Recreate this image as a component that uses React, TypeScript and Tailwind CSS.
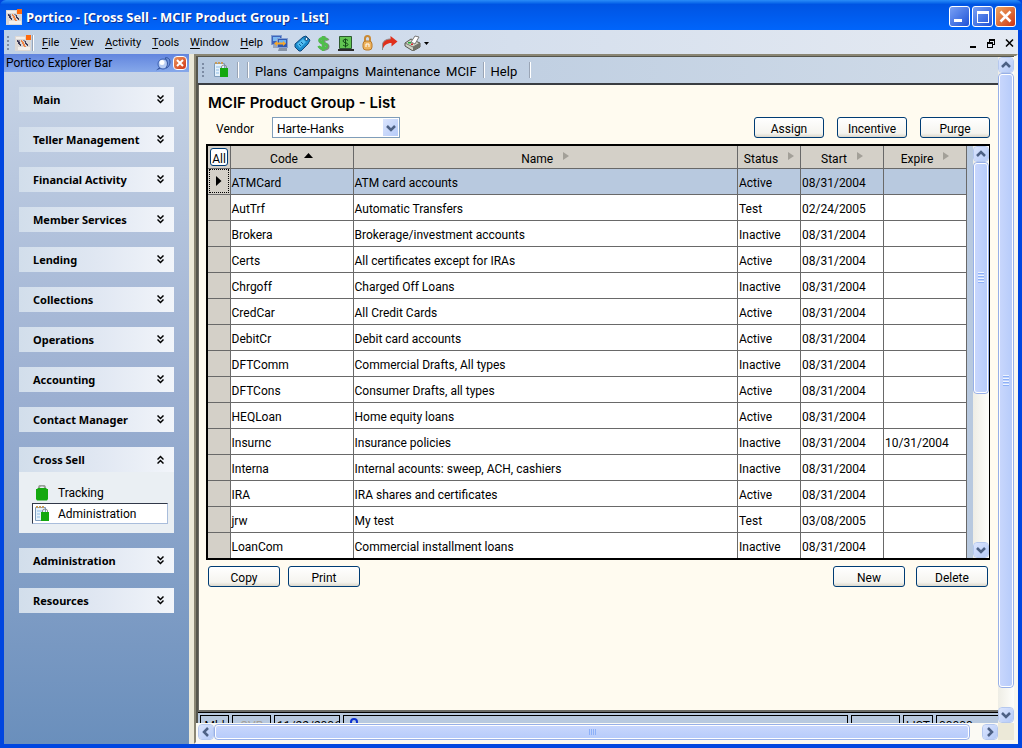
import React, { useState } from 'react';
import { clsx } from 'clsx';

const groups = [
  'Main',
  'Teller Management',
  'Financial Activity',
  'Member Services',
  'Lending',
  'Collections',
  'Operations',
  'Accounting',
  'Contact Manager',
  'Cross Sell',
  'Administration',
  'Resources',
];

const menus = ['File', 'View', 'Activity', 'Tools', 'Window', 'Help'];

const products = [
  { code: 'ATMCard', name: 'ATM card accounts', status: 'Active', start: '08/31/2004', expire: '' },
  { code: 'AutTrf', name: 'Automatic Transfers', status: 'Test', start: '02/24/2005', expire: '' },
  { code: 'Brokera', name: 'Brokerage/investment accounts', status: 'Inactive', start: '08/31/2004', expire: '' },
  { code: 'Certs', name: 'All certificates except for IRAs', status: 'Active', start: '08/31/2004', expire: '' },
  { code: 'Chrgoff', name: 'Charged Off Loans', status: 'Inactive', start: '08/31/2004', expire: '' },
  { code: 'CredCar', name: 'All Credit Cards', status: 'Active', start: '08/31/2004', expire: '' },
  { code: 'DebitCr', name: 'Debit card accounts', status: 'Active', start: '08/31/2004', expire: '' },
  { code: 'DFTComm', name: 'Commercial Drafts, All types', status: 'Inactive', start: '08/31/2004', expire: '' },
  { code: 'DFTCons', name: 'Consumer Drafts, all types', status: 'Active', start: '08/31/2004', expire: '' },
  { code: 'HEQLoan', name: 'Home equity loans', status: 'Active', start: '08/31/2004', expire: '' },
  { code: 'Insurnc', name: 'Insurance policies', status: 'Inactive', start: '08/31/2004', expire: '10/31/2004' },
  { code: 'Interna', name: 'Internal acounts: sweep, ACH, cashiers', status: 'Inactive', start: '08/31/2004', expire: '' },
  { code: 'IRA', name: 'IRA shares and certificates', status: 'Active', start: '08/31/2004', expire: '' },
  { code: 'jrw', name: 'My test', status: 'Test', start: '03/08/2005', expire: '' },
  { code: 'LoanCom', name: 'Commercial installment loans', status: 'Inactive', start: '08/31/2004', expire: '' },
];

function Logo() {
  return (
    <svg width="16" height="16" viewBox="0 0 16 16" shapeRendering="crispEdges">
      <path d="M0 1h16v15H0z" fill="#dcd8d5" />
      <path d="M1 2h9v2H1zM3 12h12v3H3z" fill="#f2efec" />
      <path d="M2 5h1v1h1v1h1v2h1v2H5v-1H4V9H3V7H2z" fill="#3c3a58" />
      <path d="M3 5h2v2H4V6H3z" fill="#8f8a98" />
      <path d="M6 5h1v1h1v1h1v2h1v2h1v1H9v-1H8V9H7V7H6z" fill="#f08648" />
      <path d="M10 6h1v2h1v1h1v2h-1v-1h-1V9h-1z" fill="#3c3a58" />
      <path d="M8 5h2v2H9V6H8z" fill="#8f8a98" />
      <path d="M11 0h5v5h-5z" fill="#ff6a0d" />
    </svg>
  );
}

function NetworkIcon() {
  return (
    <svg width="17" height="17" viewBox="0 0 17 17">
      <rect x=".5" y=".5" width="10" height="9" fill="#3d64bd" stroke="#7f9bd0" />
      <path d="M2 2h7v4H2z" fill="#7cb9f2" />
      <path d="M2 10h6v3H2z" fill="#98a6ba" />
      <rect x="6.500" y="3.500" width="10" height="9" fill="#2f59b2" stroke="#86a0d2" />
      <path d="M8 5h7v3H8z" fill="#6aaef0" />
      <path d="M8 13h8v3H7z" fill="#8593a8" />
      <path d="M3 8.500l3-2.500v1.500h6V6l3 2.500-3 2.500V9.500H6V11z" fill="#f6a72a" />
    </svg>
  );
}

function TagIcon() {
  return (
    <svg width="17" height="17" viewBox="0 0 17 17">
      <path d="M1 9l8-7 3-1 4 4-2 4-7 7-2 0-4-4z" fill="#1b8ccd" stroke="#12487c" />
      <path d="M3 9l6-5 3 3-6 6z" fill="#54bdf0" />
      <path d="M5 9l2 2M7 7l2 2" stroke="#0c5c96" />
      <circle cx="12.500" cy="4" r="1.500" fill="#e8f6ff" stroke="#12487c" />
    </svg>
  );
}

function DollarIcon() {
  return (
    <svg width="13" height="17" viewBox="0 0 13 17" fill="none">
      <path d="M11 5.500C10 3 3 3 3 6s8 2 8 5.500S4 15 2.500 11.500M7 1v15" stroke="#7f8a82" strokeWidth="3" />
      <path d="M10 5C9 2.500 2.500 2.500 2.500 5.500S10 7.500 10 11 3 14 1.500 11M6 1v15" stroke="#4fbf4a" strokeWidth="2.500" />
    </svg>
  );
}

function CashIcon() {
  return (
    <svg width="16" height="17" viewBox="0 0 16 17">
      <path d="M1.500 1.500h12v12h-12z" fill="#62c552" stroke="#2d5a30" />
      <path d="M0 14h16v2H0z" fill="#2b2b2b" />
      <path d="M10 5.500C9 4 5 4 5 6s5 1.500 5 3.500-4 2-5 .5M7.500 3.500v9" stroke="#124a16" fill="none" />
    </svg>
  );
}

function LockIcon() {
  return (
    <svg width="11" height="16" viewBox="0 0 11 16">
      <path d="M3 7V3.500a2.500 2.500 0 015 0V7" fill="none" stroke="#c98934" strokeWidth="2" />
      <rect x="1" y="6" width="9" height="9" rx="3" fill="#eeb25c" stroke="#b87a2c" />
      <path d="M4 12V9h3v3" stroke="#fff" fill="none" />
    </svg>
  );
}

function ForwardIcon() {
  return (
    <svg width="17" height="16" viewBox="0 0 17 16">
      <path d="M1.500 15V10c0-4 4-6 8-6V1l7 5.500-6 5V8C6 8 3 10 1.500 15z" fill="#e0301c" />
      <path d="M1.500 15V10c0-4 4-6 8-6" stroke="#8f8a8a" fill="none" />
    </svg>
  );
}

function PrinterIcon() {
  return (
    <svg width="17" height="16" viewBox="0 0 17 16">
      <path d="M1 8l6-4 9 4v4l-7 4-8-5z" fill="#cfd2c6" stroke="#55554c" />
      <path d="M7 7l4-6 4 1-4 7z" fill="#fff" stroke="#777" />
      <path d="M1 8l8 4 7-4" fill="none" stroke="#77776c" />
      <path d="M9 12v4l7-4V8z" fill="#6f7168" />
      <path d="M4 7h3v1.500H4z" fill="#23b03a" />
      <path d="M7 8.500h2v1.500H7z" fill="#d12a2a" />
    </svg>
  );
}

function PinIcon() {
  return (
    <svg width="15" height="15" viewBox="0 0 15 15">
      <path d="M0 14.500l5-5 2 2z" fill="#35539c" />
      <circle cx="7" cy="8" r="5" fill="#b8cdf4" stroke="#3b5fb0" />
      <path d="M9 2c3-1 5 1 5 4s-2 6-4 6c2-3 2-7-1-10z" fill="#6f92dc" stroke="#34559f" />
      <circle cx="6" cy="6.500" r="2.500" fill="#fff" />
    </svg>
  );
}

function BagIcon() {
  return (
    <svg width="12" height="16" viewBox="0 0 12 16">
      <path d="M3 4V2.500a3 2 0 016 0V4" fill="none" stroke="#9aa09a" strokeWidth="2" />
      <path d="M0 4h1l1-1h8l1 1h1v10l-1 1.500H1L0 14z" fill="#14a80f" />
    </svg>
  );
}

function AdminIcon() {
  return (
    <svg width="15" height="16" viewBox="0 0 15 16">
      <path d="M.5 1.500h10v13H.5z" fill="#e6f2fb" stroke="#7f9dbb" />
      <path d="M1 1h9" stroke="#c79c5a" strokeWidth="2" strokeDasharray="2 1" />
      <path d="M2 5h5M2 8h3M2 11h3" stroke="#8fbde6" />
      <path d="M7.500 6.500V5a2.500 2 0 015 0v1.500" fill="none" stroke="#888" />
      <path d="M6 6h8v9H6z" fill="#14a80f" />
    </svg>
  );
}

function DoubleChevron({ up }: { up?: boolean }) {
  return (
    <svg width="7" height="9" viewBox="0 0 7 9" className={clsx(up && 'rotate-180')}>
      <path d="M.5.5l3 3 3-3M.5 4.500l3 3 3-3" fill="none" stroke="#000" strokeWidth="1.500" />
    </svg>
  );
}

const chevrons = {
  up: 'M1 7l4-4 4 4',
  down: 'M1 3l4 4 4-4',
  left: 'M7 1L3 5l4 4',
  right: 'M3 1l4 4-4 4',
};

function Chevron({ dir }: { dir: keyof typeof chevrons }) {
  return (
    <svg width="10" height="10" viewBox="0 0 10 10">
      <path d={chevrons[dir]} fill="none" stroke="#4d6185" strokeWidth="2.500" />
    </svg>
  );
}

function ScrollButton({ dir }: { dir: keyof typeof chevrons }) {
  return (
    <button
      aria-label={`Scroll ${dir}`}
      className="flex size-4 shrink-0 items-center justify-center rounded-sm border border-white bg-linear-to-br from-[#dbe5fe] to-[#b5caf7] outline-1 -outline-offset-1 outline-[#b5c8ee]"
    >
      <Chevron dir={dir} />
    </button>
  );
}

function VerticalScroll({ thumb }: { thumb: string }) {
  return (
    <div className="flex w-4 shrink-0 flex-col bg-linear-to-r from-[#eeede5] to-[#fefefb]">
      <ScrollButton dir="up" />
      <div className="min-h-0 flex-1">
        <div
          className={clsx(
            'flex flex-col items-center justify-center gap-px rounded-sm border border-[#98b0e8] bg-linear-to-r from-[#c9d7fd] to-[#b6cbfa] outline-1 -outline-offset-2 outline-white',
            thumb
          )}
        >
          {[0, 1, 2, 3].map((i) => (
            <span key={i} className="h-0.5 w-1.5 border-b border-[#8cb0f8] bg-[#eef4fe]" />
          ))}
        </div>
      </div>
      <ScrollButton dir="down" />
    </div>
  );
}

function XpButton({ children, className }: { children: React.ReactNode; className?: string }) {
  return (
    <button
      className={clsx(
        'h-[21px] rounded-[3px] border border-[#003c74] bg-linear-to-b from-white via-[#f5f4ef] via-80% to-[#dcd8cc] pt-0.5 text-center leading-4',
        className
      )}
    >
      {children}
    </button>
  );
}

function Separator() {
  return <span className="h-4 w-0.5 border-l border-[#9aa5b5] bg-white" />;
}

function Grip() {
  return (
    <span className="flex flex-col gap-0.5">
      {[0, 1, 2, 3].map((i) => (
        <span key={i} className="size-0.5 bg-[#7c8ba3]" />
      ))}
    </span>
  );
}

function SortMark() {
  return (
    <svg width="6" height="8" viewBox="0 0 6 8" className="mb-1.5">
      <path d="M0 0l6 4-6 4z" fill="#a3a098" />
    </svg>
  );
}

function TitleBar() {
  return (
    <header className="flex h-[30px] shrink-0 items-center justify-between rounded-t-md bg-linear-to-b from-[#2a8cf8] via-[#0054e3] via-15% to-[#0065fb] pr-1.5 pl-1.5">
      <div className="flex items-center gap-1 pt-[3px]">
        <Logo />
        <h1 className="font-['Open_Sans',sans-serif] text-[13px] leading-5 font-bold text-white [text-shadow:1px_1px_#0f2f8a]">
          Portico - [Cross Sell - MCIF Product Group - List]
        </h1>
      </div>
      <div className="flex gap-0.5 pt-[3px]">
        <button aria-label="Minimize" className="flex size-[21px] items-end rounded-[3px] border border-white bg-linear-to-br from-[#7aa0f4] to-[#1f50d6] p-1">
          <span className="h-[3px] w-2 bg-white" />
        </button>
        <button aria-label="Maximize" className="flex size-[21px] items-center justify-center rounded-[3px] border border-white bg-linear-to-br from-[#7aa0f4] to-[#1f50d6]">
          <span className="size-3 border border-t-[3px] border-white" />
        </button>
        <button aria-label="Close" className="flex size-[21px] items-center justify-center rounded-[3px] border border-white bg-linear-to-br from-[#eda55f] to-[#cc2f10]">
          <svg width="13" height="13" viewBox="0 0 13 13">
            <path d="M1.500 1.500l10 10M11.500 1.500l-10 10" stroke="#fff" strokeWidth="2.500" />
          </svg>
        </button>
      </div>
    </header>
  );
}

function MenuBar() {
  return (
    <div className="flex h-6 shrink-0 items-center bg-linear-to-r from-[#c0d1e6] via-[#d5dfed] to-[#e5eaf2] pt-0.5 pr-1 pl-[3px]">
      <Grip />
      <span className="mr-2 ml-1.5 flex items-center gap-px">
        <Logo />
        <Separator />
      </span>
      <nav className="flex gap-[11px] text-[11px] leading-4">
        {menus.map((m) => (
          <button key={m}>
            <span className="underline underline-offset-2">{m[0]}</span>
            {m.slice(1)}
          </button>
        ))}
      </nav>
      <div className="ml-2 flex items-center gap-1.5">
        <button aria-label="Network"><NetworkIcon /></button>
        <button aria-label="Tag"><TagIcon /></button>
        <button aria-label="Dollar"><DollarIcon /></button>
        <button aria-label="Cash" className="ml-0.5"><CashIcon /></button>
        <button aria-label="Lock" className="mx-0.5"><LockIcon /></button>
        <button aria-label="Forward"><ForwardIcon /></button>
        <button aria-label="Print" className="flex items-center gap-[3px]">
          <PrinterIcon />
          <svg width="5" height="3" viewBox="0 0 5 3"><path d="M0 0h5L2.500 3z" /></svg>
        </button>
      </div>
      <div className="ml-auto flex items-center gap-2.5">
        <button aria-label="Minimize document">
          <svg width="7" height="9" viewBox="0 0 7 9"><path d="M0 7h6v2H0z" /></svg>
        </button>
        <button aria-label="Restore document">
          <svg width="8" height="9" viewBox="0 0 8 9" fill="none" stroke="#000" shapeRendering="crispEdges">
            <path d="M2.500 3V.5h5v5H6M2 1.500h6M.5 3.500h5v5h-5zM0 4.500h6" />
          </svg>
        </button>
        <button aria-label="Close document">
          <svg width="9" height="8" viewBox="0 0 9 8"><path d="M1 .5l7 7M8 .5l-7 7" stroke="#000" strokeWidth="1.500" /></svg>
        </button>
      </div>
    </div>
  );
}

function Sidebar() {
  const [open, setOpen] = useState('Cross Sell');

  return (
    <aside className="flex w-[185px] shrink-0 flex-col bg-linear-to-b from-[#cad6e7] via-[#9bafd1] to-[#6a8fbc]">
      <div className="flex h-[18px] shrink-0 items-center bg-linear-to-b from-[#6285de] to-[#86a8ea] px-0.5">
        <h2 className="text-xs leading-4">Portico Explorer Bar</h2>
        <button aria-label="Pin" className="mr-0.5 ml-auto"><PinIcon /></button>
        <button aria-label="Close bar" className="flex size-3.5 items-center justify-center rounded-sm border border-white bg-linear-to-br from-[#e8935a] to-[#d02c12]">
          <svg width="8" height="8" viewBox="0 0 8 8"><path d="M1 1l6 6M7 1L1 7" stroke="#fff" strokeWidth="2" /></svg>
        </button>
      </div>
      <div className="flex flex-col gap-[15px] p-[15px]">
        {groups.map((g) => (
          <section key={g}>
            <button
              onClick={() => setOpen(open === g ? '' : g)}
              className="flex h-[25px] w-full items-center justify-between bg-linear-to-r from-[#d2deeb] via-[#e0e7f2] to-[#f2f5fa] pt-0.5 pr-2.5 pl-3.5 font-['Noto_Sans',sans-serif] text-[11px] font-bold"
            >
              {g}
              <span className="mb-0.5"><DoubleChevron up={open === g} /></span>
            </button>
            {g === 'Cross Sell' && open === g && (
              <div className="flex flex-col bg-[#eaeff3] pt-[11px] pr-1.5 pb-[9px] pl-[13px]">
                <a href="#tracking" className="flex h-5 items-center gap-2.5 pl-1">
                  <BagIcon />
                  Tracking
                </a>
                <a href="#administration" className="flex h-[21px] items-center gap-2 border border-t-[#303848] border-r-[#a9bddb] border-b-[#a9bddb] border-l-[#303848] bg-white pl-0.5">
                  <AdminIcon />
                  Administration
                </a>
              </div>
            )}
          </section>
        ))}
      </div>
    </aside>
  );
}

function ProductTable() {
  const [selected, setSelected] = useState(0);

  return (
    <div className="flex h-[416px] overflow-hidden border-2 border-r border-black bg-[#b8c9df]">
      <div className="min-w-0 flex-1 overflow-hidden">
        <table className="w-full table-fixed border-collapse text-left">
          <colgroup>
            <col className="w-[22px]" />
            <col className="w-[123px]" />
            <col />
            <col className="w-[63px]" />
            <col className="w-[83px]" />
            <col className="w-[83px]" />
          </colgroup>
          <thead>
            <tr className="h-[22px] bg-[#d4d0c8] [&>th]:border-r [&>th]:border-b [&>th]:border-[#696969] [&>th]:p-0 [&>th]:font-normal">
              <th>
                <button className="ml-0.5 block h-[18px] w-[18px] rounded-[3px] border border-[#003c74] bg-white pt-0.5 text-center leading-4">All</button>
              </th>
              <th>
                <span className="flex items-center justify-center gap-1.5 pt-1">
                  Code
                  <svg width="9" height="5" viewBox="0 0 9 5" className="mb-1.5"><path d="M0 5h9L4.500 0z" /></svg>
                </span>
              </th>
              <th><span className="flex items-center justify-center gap-2.5 pt-1">Name <SortMark /></span></th>
              <th><span className="flex items-center justify-center gap-2.5 pt-1">Status <SortMark /></span></th>
              <th><span className="flex items-center justify-center gap-2.5 pt-1">Start <SortMark /></span></th>
              <th><span className="flex items-center justify-center gap-2.5 pt-1">Expire <SortMark /></span></th>
            </tr>
          </thead>
          <tbody>
            {products.map((p, i) => (
              <tr
                key={p.code}
                onClick={() => setSelected(i)}
                className={clsx(
                  'h-[26px] [&>td]:border-r [&>td]:border-b [&>td]:border-[#696969] [&>td]:p-0 [&>td]:pt-1 [&>td]:pl-px [&>td]:leading-4',
                  selected === i ? 'bg-[#b8c9df]' : 'bg-white'
                )}
              >
                <td className={clsx('bg-[#d4d0c8]', selected === i && 'outline-1 -outline-offset-2 outline-dotted outline-black')}>
                  {selected === i && (
                    <svg width="6" height="10" viewBox="0 0 6 10" className="mx-auto mb-1"><path d="M0 0l5.500 5L0 10z" /></svg>
                  )}
                </td>
                <td>{p.code}</td>
                <td>{p.name}</td>
                <td>{p.status}</td>
                <td>{p.start}</td>
                <td>{p.expire}</td>
              </tr>
            ))}
          </tbody>
        </table>
      </div>
      <div className="w-1.5 shrink-0" />
      <VerticalScroll thumb="h-[61%]" />
    </div>
  );
}

function StatusBar() {
  return (
    <footer className="flex h-[11px] shrink-0 gap-[3px] overflow-hidden border-t border-black bg-[#b8c9df] pt-0.5 pl-0.5 text-xs leading-4 [&>span]:h-5 [&>span]:shrink-0 [&>span]:border [&>span]:border-black [&>span]:px-0.5 [&>span]:pt-0.5">
      <span className="w-[29px] text-center">Mbl</span>
      <span className="w-[39px] text-center text-[#a39f98]">OVR</span>
      <span className="w-[66px] text-center">11/22/2006</span>
      <span className="flex-1">
        <svg width="8" height="8" viewBox="0 0 8 8" className="ml-1"><circle cx="4" cy="4" r="3" fill="none" stroke="#0a2fd0" strokeWidth="2" /></svg>
      </span>
      <span className="w-[49px]" />
      <span className="w-[30px] text-center">LIST</span>
      <span className="w-[62px] border-r-0!">00000-000</span>
    </footer>
  );
}

export default function App() {
  return (
    <div className="flex h-screen flex-col bg-[#0046e0] font-['Roboto',sans-serif] text-xs text-black">
      <TitleBar />
      <div className="mx-1 mb-1 flex min-h-0 flex-1 flex-col bg-[#ece9d8]">
        <MenuBar />
        <div className="flex min-h-0 flex-1">
          <Sidebar />
          <div className="w-[5px] shrink-0 bg-[#ece9d8]" />
          <div className="flex min-w-0 flex-1 flex-col border-2 border-t-[#8a8674] border-r-[#f8f7f0] border-b-[#f8f7f0] border-l-[#8a8674] bg-[#f8f7f0] pr-0.5 pb-0.5">
            <div className="flex min-h-0 flex-1 border-t border-l-2 border-[#55554c]">
              <div className="flex min-w-0 flex-1 flex-col">
                <div className="flex h-7 shrink-0 items-center border-b-2 border-[#3a3d42] bg-linear-to-r from-[#b6c8de] to-[#d0dbe8] pl-1">
                  <Grip />
                  <button aria-label="Administration" className="mr-2 ml-2.5"><AdminIcon /></button>
                  <Separator />
                  <span className="w-2" />
                  <Separator />
                  <nav className="mx-1.5 flex gap-1.5 pt-1 text-[13px]">
                    <button>Plans</button>
                    <button>Campaigns</button>
                    <button>Maintenance</button>
                    <button>MCIF</button>
                  </nav>
                  <Separator />
                  <button className="mr-3 ml-1.5 pt-1 text-[13px]">Help</button>
                  <Separator />
                </div>

                <main className="min-h-0 flex-1 overflow-hidden border-b-2 border-l border-[#6b6b66] bg-[#fffbf0] pr-2 pl-[7px]">
                  <h2 className="pt-2 pl-0.5 font-['Inter',sans-serif] text-[15px] leading-5 font-semibold">MCIF Product Group - List</h2>
                  <div className="mt-1 mb-1.5 flex items-center">
                    <label htmlFor="vendor" className="w-[66px] pt-0.5 pl-2.5">Vendor</label>
                    <div className="relative">
                      <select id="vendor" className="block h-[21px] w-32 appearance-none border border-[#7f9db9] bg-white pt-0.5 pl-1 leading-4">
                        <option>Harte-Hanks</option>
                      </select>
                      <span className="pointer-events-none absolute top-0.5 right-0.5 flex h-[17px] w-[15px] items-center justify-center bg-linear-to-br from-[#dbe5fe] to-[#b5caf7]">
                        <Chevron dir="down" />
                      </span>
                    </div>
                    <div className="ml-auto flex gap-[13px]">
                      <XpButton className="w-[70px]">Assign</XpButton>
                      <XpButton className="w-[70px]">Incentive</XpButton>
                      <XpButton className="w-[70px]">Purge</XpButton>
                    </div>
                  </div>
                  <ProductTable />
                  <div className="mt-1.5 flex justify-between px-0.5">
                    <div className="flex gap-2">
                      <XpButton className="w-[72px]">Copy</XpButton>
                      <XpButton className="w-[72px]">Print</XpButton>
                    </div>
                    <div className="flex gap-[11px]">
                      <XpButton className="w-[72px]">New</XpButton>
                      <XpButton className="w-[72px]">Delete</XpButton>
                    </div>
                  </div>
                </main>
                <StatusBar />
              </div>
              <VerticalScroll thumb="h-[97%]" />
            </div>
            <div className="flex h-[17px] shrink-0 items-center bg-[#fbfaf4] pl-0.5">
              <ScrollButton dir="left" />
              <div className="mr-3 flex h-4 flex-1 items-center justify-center gap-px rounded-sm border border-[#98b0e8] bg-linear-to-b from-[#c9d7fd] to-[#b6cbfa] outline-1 -outline-offset-2 outline-white">
                {[0, 1, 2, 3].map((i) => (
                  <span key={i} className="h-1.5 w-px border-r border-[#8cb0f8] bg-[#eef4fe]" />
                ))}
              </div>
              <ScrollButton dir="right" />
              <div className="w-4 self-stretch bg-[#ece9d8]" />
            </div>
          </div>
        </div>
      </div>
    </div>
  );
}
